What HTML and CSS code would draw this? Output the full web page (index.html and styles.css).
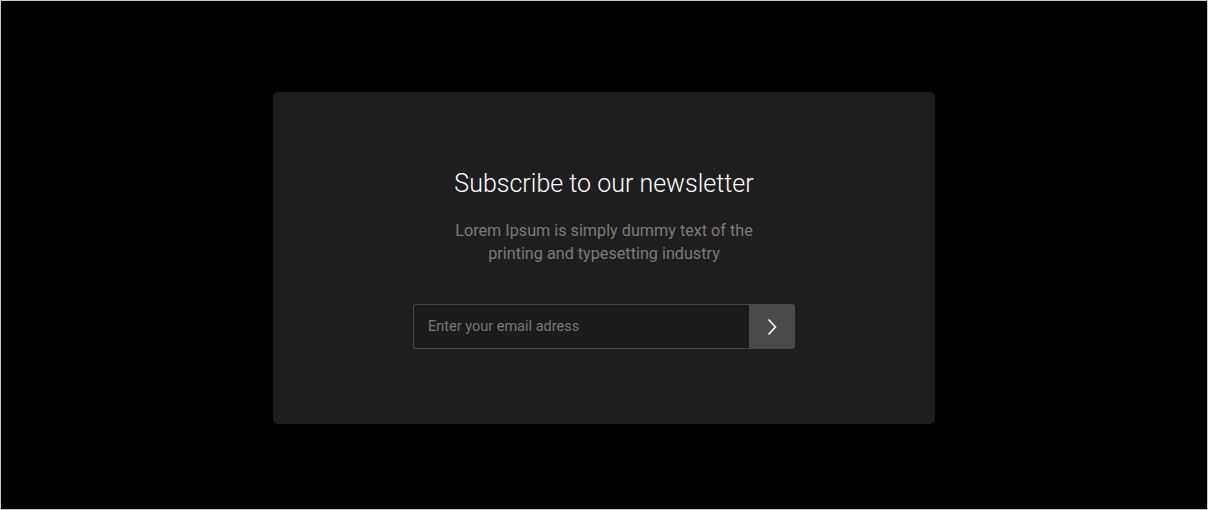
FILE: index.html
```html
<!DOCTYPE html>
<html lang="en">
<head>
<meta charset="utf-8">
<title>Newsletter</title>
<link rel="stylesheet" href="styles.css">
</head>
<body>
<div class="page">
  <section class="card">
    <h1 class="title">Subscribe to our newsletter</h1>
    <p class="subtitle">Lorem Ipsum is simply dummy text of the printing and typesetting industry</p>
    <form class="subscribe">
      <input class="email" type="email" placeholder="Enter your email adress">
      <button class="submit" type="button" aria-label="Subscribe">
        <svg width="12" height="20" viewBox="0 0 12 20"><path d="M2.5 2.5 L9.5 10 L2.5 17.5" fill="none" stroke="#fff" stroke-width="1.6"/></svg>
      </button>
    </form>
  </section>
</div>
</body>
</html>
```
FILE: styles.css
```css
html, body {
  margin: 0;
  padding: 0;
  background: #000;
}
.page {
  box-sizing: border-box;
  width: 1208px;
  height: 510px;
  border: 1px solid #c9c9c9;
  background: #000;
  padding-top: 6px;
  display: flex;
  align-items: center;
  justify-content: center;
  font-family: Roboto, "Liberation Sans", sans-serif;
}
.card {
  box-sizing: border-box;
  width: 662px;
  height: 332px;
  background: #1e1e1e;
  border-radius: 5px;
  padding-top: 78px;
  display: flex;
  flex-direction: column;
  align-items: center;
}
.title {
  margin: 0;
  font-size: 25px;
  font-weight: 300;
  line-height: 28px;
  color: #fff;
}
.subtitle {
  margin: 21px 0 0;
  width: 310px;
  text-align: center;
  font-size: 16.2px;
  line-height: 23px;
  color: #7c7c7c;
}
.subscribe {
  margin-top: 39px;
  display: flex;
  width: 382px;
  height: 45px;
}
.email {
  box-sizing: border-box;
  flex: 1;
  height: 45px;
  margin: 0;
  padding: 0 14px;
  background: #1b1b1b;
  border: 1px solid #474747;
  border-right: none;
  border-radius: 3px 0 0 3px;
  font-family: Roboto, "Liberation Sans", sans-serif;
  font-size: 14.5px;
  color: #ddd;
  outline: none;
}
.email::placeholder {
  color: #787878;
}
.submit {
  width: 46px;
  height: 45px;
  margin: 0;
  padding: 0;
  border: none;
  border-radius: 0 3px 3px 0;
  background: #4a4a4a;
  display: flex;
  align-items: center;
  justify-content: center;
}
```
